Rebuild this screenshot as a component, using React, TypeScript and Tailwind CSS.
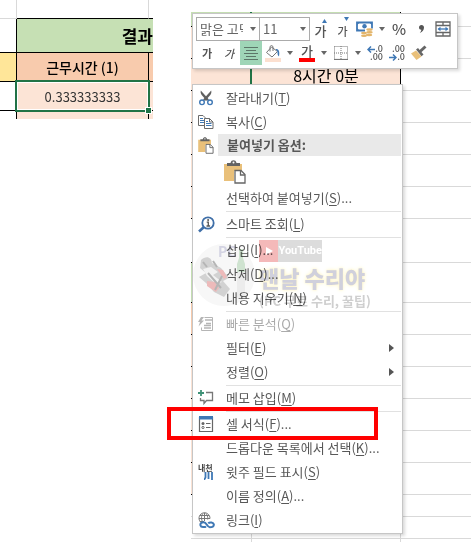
import React from 'react'

type IconProps = { className?: string }

const CutIcon = () => (
  <svg width="16" height="16" viewBox="0 0 16 16" fill="none">
    <path d="M2.800.5c-.5 2 0 3.300.9 4.500l5.200 6 2-1.500z" fill="#606060" />
    <path d="M13.200.5c.5 2 0 3.300-.9 4.500l-5.200 6-2-1.500z" fill="#606060" />
    <circle cx="4" cy="12.300" r="2.300" stroke="#3f78b5" strokeWidth="1.400" />
    <circle cx="12" cy="12.300" r="2.300" stroke="#3f78b5" strokeWidth="1.400" />
  </svg>
)

const CopyIcon = () => (
  <svg width="16" height="16" viewBox="0 0 16 16" fill="none">
    <path d="M6 11.500H.5v-10h4.500l2 2V5" stroke="#6b6b6b" />
    <path d="M2 4.500h3M2 6.500h4M2 8.500h4" stroke="#3f78b5" />
    <path d="M6.500 4.500h5L15 8v6.500H6.500z" fill="#fff" stroke="#6b6b6b" />
    <path d="M11.500 4.500V8H15" stroke="#6b6b6b" />
    <path d="M8 7.500h2M8 9.500h5.500M8 11.500h5.500" stroke="#3f78b5" />
  </svg>
)

const PasteIcon = ({ className }: IconProps) => (
  <svg className={className} viewBox="0 0 22 24" fill="none">
    <path d="M0 4h18v7H10v10H0z" fill="#e9c07a" />
    <path d="M3 6V3h3.500C7 1 8 .3 9.500.3S12 1 12.500 3H16v3z" fill="#636363" />
    <circle cx="9.500" cy="2.600" r="1" fill="#fff" />
    <path d="M11 10.500h6l4 4v8.500H11z" fill="#fff" stroke="#666" strokeWidth="1.300" />
    <path d="M16.500 10.500V15H21" stroke="#666" strokeWidth="1.300" />
  </svg>
)

const LookupIcon = () => (
  <svg width="18" height="17" viewBox="0 0 18 17" fill="none">
    <circle cx="10" cy="7" r="5.700" stroke="#3f6fa8" strokeWidth="1.800" />
    <path d="M6 11 1 15.500" stroke="#3f6fa8" strokeWidth="2.600" />
    <path d="M8.700 6.200h1.600v3.600M8.500 10h3.600" stroke="#555" strokeWidth="1.300" />
    <circle cx="10.100" cy="4" r="1" fill="#555" />
  </svg>
)

const AnalysisIcon = () => (
  <svg width="16" height="16" viewBox="0 0 16 16" fill="none" stroke="#b5b5b5">
    <path d="M6.500 1.500h8v13H3.500v-3" />
    <path d="M7 4h7M8 7.500h5M6 9.500h7M6 12h7" strokeWidth="1.500" />
    <path d="M3 1 0 6h2L.5 10.500 6 4.500H3.500L6 1z" fill="#b5b5b5" stroke="none" />
  </svg>
)

const MemoIcon = () => (
  <svg width="16" height="16" viewBox="0 0 16 16" fill="none">
    <path d="M3 0v6M0 3h6" stroke="#3f9277" strokeWidth="1.800" />
    <path d="M8 2.500h6.500v8H8.500L6 13.500v-3H2.500V8" stroke="#777" strokeWidth="1.300" />
  </svg>
)

const FormatIcon = () => (
  <svg width="16" height="16" viewBox="0 0 16 16" fill="none">
    <path d="M1.500 1.500h13v14h-13z" fill="#fff" stroke="#666" strokeWidth="1.200" />
    <path d="M1 0h14v3.500H1z" fill="#3f78b5" />
    <circle cx="5" cy="7.500" r="1.500" fill="#666" />
    <circle cx="5" cy="11.500" r="1.100" stroke="#666" />
    <path d="M8 7.500h4.500M8 11.500h4.500" stroke="#666" strokeWidth="1.200" />
  </svg>
)

const PhoneticIcon = () => (
  <span className="flex flex-col items-end">
    <span className="text-[8px] font-bold leading-[8px] text-[#444]">내천</span>
    <svg width="9" height="8" viewBox="0 0 9 8" fill="none" stroke="#3f78b5" strokeWidth="1.800">
      <path d="M1.500 0v5.500L0 8M4.500 0v7M8 0v8" />
    </svg>
  </span>
)

const LinkIcon = () => (
  <svg width="17" height="17" viewBox="0 0 17 17" fill="none">
    <g stroke="#777">
      <path d="M3 10.500A5.500 5.500 0 1 1 12 6.500M1 6.500h11M2 3.500h9M2 9.500h4" />
      <path d="M6.500 1v8M5 10.500c-2-3-2-6.500 0-9M8 1.500c1.300 1.500 2 3.500 1.700 6" />
    </g>
    <path d="M4 12.500h12" stroke="#fff" strokeWidth="5" />
    <g stroke="#3f78b5" strokeWidth="2">
      <path d="M8 14.300c-1 1.200-5 1.200-5.500-.9-.6-2.200 1.300-3.200 3.200-3.200 3 0 3.300 5 6 5 2.500 0 4.500-.8 4.100-2.900-.4-2-3.900-2.500-5.600-1.100" />
    </g>
  </svg>
)

const Caret = () => (
  <svg width="6" height="4" viewBox="0 0 6 4" fill="#666">
    <path d="M0 0h6L3 4z" />
  </svg>
)

const MoneyIcon = () => (
  <svg width="18" height="17" viewBox="0 0 18 17" fill="none">
    <path d="M1 1.500h15v8H1z" fill="#fff" stroke="#3f78b5" strokeWidth="1.800" />
    <path d="M1 1h3.500L1 4zM16 1h-3.500L16 4zM1 10V7l3 3z" fill="#3f78b5" />
    <circle cx="8.500" cy="5.300" r="2.200" fill="#3f78b5" />
    <path d="M9 7.500h8V16H5v-4h4z" fill="#fff" />
    <g fill="#e3b56b">
      <ellipse cx="13.500" cy="8.500" rx="3.200" ry="1.300" />
      <ellipse cx="13.500" cy="11.300" rx="3.200" ry="1.200" />
      <ellipse cx="13" cy="14" rx="3.200" ry="1.200" />
      <ellipse cx="8" cy="12" rx="3" ry="1.200" />
      <ellipse cx="8" cy="14.800" rx="3" ry="1.200" />
    </g>
  </svg>
)

const MergeIcon = () => (
  <svg width="16" height="16" viewBox="0 0 16 16" fill="none" stroke="#666" strokeWidth="1.300">
    <path d="M1 1h14v14H1zM1 4.500h14M1 11.500h14M8 1v3.500M8 11.500V15" />
    <path d="M3.500 8h9" stroke="#3f78b5" />
    <path d="M5.500 5.800 2.500 8l3 2.200zM10.500 5.800l3 2.200-3 2.200z" fill="#3f78b5" stroke="none" />
  </svg>
)

const AlignIcon = () => (
  <svg width="14" height="13" viewBox="0 0 14 13" stroke="#5c7568">
    <path d="M0 .5h14M2 3.500h10M0 6.500h14M2 9.500h10M0 12.500h14" />
  </svg>
)

const FillIcon = () => (
  <svg width="16" height="17" viewBox="0 0 16 17" fill="none">
    <path d="M6.500 2 1.500 7.500 7 12l5.500-5.500z" fill="#fff" stroke="#777" />
    <path d="M5 6.500V1.500Q6.500-.5 8 1.500V6" stroke="#777" />
    <path d="M10.500 4c3-.3 4.500 1.500 3.500 7.500-1.500-1-1.500-3-1.500-5z" fill="#3f78b5" />
    <path d="M0 13h16v4H0z" fill="#fce0d0" />
  </svg>
)

const BorderIcon = () => (
  <svg width="14" height="14" viewBox="0 0 14 14" fill="none" stroke="#777">
    <path d="M.5.500h13v13M.5.500v13M7 0v13M0 7h14" strokeDasharray="1 1" />
    <path d="M0 13.500h14" strokeWidth="1.200" />
  </svg>
)

const BrushIcon = () => (
  <svg width="16" height="16" viewBox="0 0 16 16" fill="none">
    <path d="M5 5.500 0 8.500 5.500 15l5-3.500z" fill="#e9c07a" />
    <path d="m5 4.500 2-1.500 5.500 6.500-2 1.700z" fill="#666" />
    <path d="M9 6.500 14.500 1.500" stroke="#666" strokeWidth="3" />
  </svg>
)

const DecimalIcon = ({ increase }: { increase?: boolean }) => (
  <span className="flex w-4 flex-col text-[9px] font-medium leading-[8px] text-[#555]">
    <span className={increase ? 'text-right' : 'flex items-center justify-end'}>
      {!increase && (
        <svg width="8" height="7" viewBox="0 0 8 7" fill="none" stroke="#3f78b5" strokeWidth="1.500">
          <path d="M8 3.500H1M4 .5l-3 3 3 3" />
        </svg>
      )}
      {increase ? '.00' : '.0'}
    </span>
    <span className={increase ? 'flex items-center justify-end' : 'text-right'}>
      {increase && (
        <svg width="8" height="7" viewBox="0 0 8 7" fill="none" stroke="#3f78b5" strokeWidth="1.500">
          <path d="M0 3.500h7M4 .5l3 3-3 3" />
        </svg>
      )}
      {increase ? '.0' : '.00'}
    </span>
  </span>
)

const SizeIcon = ({ up }: { up?: boolean }) => (
  <span className="flex items-start">
    <span className={up ? 'pt-1 text-[13px] leading-4 font-medium' : 'pt-1 text-[11px] leading-5 font-medium'}>가</span>
    <svg className="-ml-1 shrink-0" width="5" height="4" viewBox="0 0 5 4" fill="#3f78b5">
      {up ? <path d="M0 4h5L2.500 0z" /> : <path d="M0 0h5L2.500 4z" />}
    </svg>
  </span>
)

type MenuEntry = {
  label: string
  accessKey: string
  tail?: string
  icon?: React.ReactNode
  disabled?: boolean
  submenu?: boolean
}

const groups: MenuEntry[][] = [
  [{ label: '스마트 조회', accessKey: 'L', icon: <LookupIcon /> }],
  [
    { label: '삽입', accessKey: 'I', tail: '...' },
    { label: '삭제', accessKey: 'D', tail: '...' },
    { label: '내용 지우기', accessKey: 'N' },
  ],
  [
    { label: '빠른 분석', accessKey: 'Q', icon: <AnalysisIcon />, disabled: true },
    { label: '필터', accessKey: 'E', submenu: true },
    { label: '정렬', accessKey: 'O', submenu: true },
  ],
  [{ label: '메모 삽입', accessKey: 'M', icon: <MemoIcon /> }],
  [
    { label: '셀 서식', accessKey: 'F', tail: '...', icon: <FormatIcon /> },
    { label: '드롭다운 목록에서 선택', accessKey: 'K', tail: '...' },
    { label: '윗주 필드 표시', accessKey: 'S', icon: <PhoneticIcon /> },
    { label: '이름 정의', accessKey: 'A', tail: '...' },
    { label: '링크', accessKey: 'I', icon: <LinkIcon /> },
  ],
]

const MenuItem = ({ item }: { item: MenuEntry }) => (
  <button
    type="button"
    role="menuitem"
    disabled={item.disabled}
    className="flex h-6 w-full items-center text-left text-[13px] leading-6 whitespace-nowrap text-[#585858] disabled:text-[#ababab]"
  >
    <span className="flex w-[33px] shrink-0 items-center pl-[5px]">{item.icon}</span>
    <span className="flex-1">
      {item.label}(<u className="underline-offset-2">{item.accessKey}</u>){item.tail}
    </span>
    {item.submenu && (
      <svg className="mr-2" width="5" height="8" viewBox="0 0 5 8" fill="#555">
        <path d="M0 0v8l5-4z" />
      </svg>
    )}
  </button>
)

const ContextMenu = () => (
  <div role="menu" className="w-[211px] border border-[#c6c6c6] bg-white py-px shadow-[2px_2px_3px_rgba(0,0,0,0.15)]">
    <MenuItem item={{ label: '잘라내기', accessKey: 'T', icon: <CutIcon /> }} />
    <MenuItem item={{ label: '복사', accessKey: 'C', icon: <CopyIcon /> }} />
    <div className="flex h-6 items-start">
      <span className="flex w-[25px] shrink-0 pt-[3px] pl-[5px]">
        <PasteIcon className="h-[17px] w-4" />
      </span>
      <span className="mr-px h-[22px] flex-1 bg-[#e9e9e9] pl-[9px] text-[13px] leading-[22px] font-bold text-[#585858]">
        붙여넣기 옵션:
      </span>
    </div>
    <button type="button" role="menuitem" aria-label="붙여넣기" className="flex h-7 w-full items-center pl-[31px]">
      <PasteIcon className="h-6 w-[22px]" />
    </button>
    <MenuItem item={{ label: '선택하여 붙여넣기', accessKey: 'S', tail: '...' }} />
    {groups.map((group) => (
      <React.Fragment key={group[0].label}>
        <div role="separator" className="mr-px ml-[33px] h-[2px] border-b border-[#e1e1e1]" />
        {group.map((item) => (
          <MenuItem key={item.label} item={item} />
        ))}
      </React.Fragment>
    ))}
  </div>
)

const ToolButton = ({ label, active, children }: { label: string; active?: boolean; children: React.ReactNode }) => (
  <button
    type="button"
    aria-label={label}
    className={
      active
        ? 'flex h-6 w-[22px] items-center justify-center bg-[#9fd5b7]'
        : 'flex h-6 w-[22px] items-center justify-center'
    }
  >
    {children}
  </button>
)

const DropButton = ({ label }: { label: string }) => (
  <button type="button" aria-label={label} className="flex h-6 w-3 items-center justify-center">
    <Caret />
  </button>
)

const MiniToolbar = () => (
  <div className="w-[266px] border border-[#c6c6c6] bg-white p-[3px] text-[#555] shadow-[2px_2px_3px_rgba(0,0,0,0.15)]">
    <div className="flex">
      <label className="relative flex items-center">
        <select
          aria-label="글꼴"
          className="h-6 w-16 appearance-none border border-[#ababab] bg-white pr-4 pl-[3px] text-[13px] leading-5 text-[#666]"
        >
          <option>맑은 고딕</option>
        </select>
        <span className="pointer-events-none absolute right-1">
          <Caret />
        </span>
      </label>
      <label className="relative flex items-center">
        <select
          aria-label="글꼴 크기"
          className="h-6 w-[50px] appearance-none border border-l-0 border-[#ababab] bg-white pr-4 pl-[3px] text-[13px] leading-5 text-[#666]"
        >
          <option>11</option>
        </select>
        <span className="pointer-events-none absolute right-1">
          <Caret />
        </span>
      </label>
      <ToolButton label="글꼴 크기 크게">
        <SizeIcon up />
      </ToolButton>
      <ToolButton label="글꼴 크기 작게">
        <SizeIcon />
      </ToolButton>
      <ToolButton label="회계 표시 형식">
        <MoneyIcon />
      </ToolButton>
      <DropButton label="통화 선택" />
      <ToolButton label="백분율">
        <span className="text-[15px] leading-6 font-medium">%</span>
      </ToolButton>
      <ToolButton label="쉼표 스타일">
        <svg width="5" height="8" viewBox="0 0 5 8" fill="#555">
          <path d="M2.500 0C4 0 5 1 5 2.600 5 5 3.500 7.200.8 8c1-1.300 1.500-2.300 1.500-3.200C1 4.800 0 3.800 0 2.500S1 0 2.500 0z" />
        </svg>
      </ToolButton>
      <ToolButton label="병합하고 가운데 맞춤">
        <MergeIcon />
      </ToolButton>
    </div>
    <div className="flex">
      <ToolButton label="굵게">
        <span className="text-[11px] leading-6 font-bold">가</span>
      </ToolButton>
      <ToolButton label="기울임꼴">
        <span className="text-[11px] leading-6 font-medium italic">가</span>
      </ToolButton>
      <ToolButton label="가운데 맞춤" active>
        <AlignIcon />
      </ToolButton>
      <ToolButton label="채우기 색">
        <FillIcon />
      </ToolButton>
      <DropButton label="채우기 색 선택" />
      <ToolButton label="글꼴 색">
        <span className="flex w-4 flex-col items-center border-b-4 border-[#f00] text-[13px] leading-[14px] font-medium">
          가
        </span>
      </ToolButton>
      <DropButton label="글꼴 색 선택" />
      <ToolButton label="테두리">
        <BorderIcon />
      </ToolButton>
      <DropButton label="테두리 선택" />
      <ToolButton label="자릿수 늘림">
        <DecimalIcon />
      </ToolButton>
      <ToolButton label="자릿수 줄임">
        <DecimalIcon increase />
      </ToolButton>
      <ToolButton label="서식 복사">
        <BrushIcon />
      </ToolButton>
    </div>
  </div>
)

const Watermark = () => (
  <div className="pointer-events-none absolute top-[236px] left-0.5 flex items-start gap-1 mix-blend-multiply">
    <svg width="62" height="76" viewBox="0 0 62 76" fill="none">
      <circle cx="31" cy="39" r="31" fill="#f7f7f7" />
      <path d="M8 24c5-5 11-3 11 3l9 5 8 10-6 3 7 8-6 8-10-5-8-9-7-6 7-4-6-5z" fill="#d2d2d2" />
      <path d="m10 33 8-2 7 5-5 3 9 7-6 2-9-8z" fill="#f2f2f2" />
      <path d="m14 45 8 1 4 6-3 4-9-6zM24 33l6 1 4 7-3 2z" fill="#edbaba" />
      <path d="M20 25l4 6M15 37l13 15M29 40l-7 14M10 26l4 5" stroke="#b5b5b5" strokeWidth="2" />
      <path d="M46 13h4v9l2 6v10h-8V28l2-6z" fill="#cfe3d0" />
      <path d="M44 36h8v26h-8z" fill="#ececec" />
      <text x="25" y="21" fontSize="14" fontWeight="700" fill="#d3d3e2">
        PC
      </text>
    </svg>
    <div className="flex flex-col pt-1 whitespace-nowrap text-[#cfcfcf]">
      <div className="flex h-[22px] w-[63px] items-center bg-[#dcdcdc]">
        <span className="flex h-full w-5 items-center justify-center bg-[#f4b9b9]">
          <svg width="8" height="8" viewBox="0 0 8 8" fill="#fff">
            <path d="M1 0v8l7-4z" />
          </svg>
        </span>
        <span className="flex-1 text-center font-['Roboto',sans-serif] text-[11px] leading-5 font-bold text-white">
          YouTube
        </span>
      </div>
      <span className="text-[22px] leading-[31px] font-black text-[#d0d0dc] [text-shadow:0_0_4px_#fff6c8,0_0_2px_#fff6c8]">
        맨날 수리야
      </span>
      <span className="text-[13px] leading-4 font-bold">(PC 무료 수리, 꿀팁)</span>
    </div>
  </div>
)

// rows of the sheet behind the menu
const sheetRows = [
  { height: 'h-[15px]', fill: 'bg-[#c6e0b4]' },
  { height: 'h-8', fill: 'bg-[#fce4d6]' },
  { height: 'h-8', fill: 'bg-[#fce4d6]', value: '8시간 0분' },
  { height: 'h-8', fill: 'bg-[#fce4d6]' },
  { height: 'h-8', fill: 'bg-[#fce4d6]' },
  { height: 'h-8', fill: 'bg-[#fce4d6]' },
  { height: 'h-8', fill: 'bg-[#fce4d6]' },
  { height: 'h-[44px]', fill: 'bg-white' },
  { height: 'h-10', fill: 'bg-[#c6e0b4]' },
  { height: 'h-8', fill: 'bg-[#f8cbad]' },
  { height: 'h-8', fill: 'bg-[#fce4d6]' },
  { height: 'h-8', fill: 'bg-[#fce4d6]' },
  { height: 'h-8', fill: 'bg-[#fce4d6]' },
  { height: 'h-8', fill: 'bg-[#fce4d6]' },
  { height: 'h-8', fill: 'bg-[#fce4d6]' },
  { height: 'h-[22px]', plain: true },
  { height: 'h-[22px]', plain: true },
  { height: 'h-[3px]', plain: true, last: true },
]

const BackSheet = () => (
  <table className="w-full table-fixed border-separate border-spacing-0">
    <colgroup>
      <col className="w-[61px]" />
      <col className="w-[149px]" />
      <col />
    </colgroup>
    <tbody>
      {sheetRows.map((row, i) => {
        const cell = row.plain
          ? `border-r border-[#d9d9d9] p-0 ${row.last ? '' : 'border-b'}`
          : `border-b border-b-black p-0 ${row.fill}`
        return (
          <tr key={i} className={row.height}>
            <td className={row.plain ? cell : `${cell} border-r-2 border-r-[#217346]`} />
            <td
              className={
                row.plain
                  ? cell
                  : `${cell} border-r border-r-black text-center text-base leading-none text-black`
              }
            >
              {row.value}
            </td>
            <td className={row.last ? 'p-0' : 'border-b border-[#d9d9d9] p-0'} />
          </tr>
        )
      })}
    </tbody>
  </table>
)

const ResultSheet = () => (
  <table className="w-[153px] table-fixed border-separate border-spacing-0 text-black">
    <colgroup>
      <col className="w-[17px]" />
      <col className="w-[132px]" />
      <col className="w-1" />
    </colgroup>
    <tbody>
      <tr className="h-[19px]">
        <td className="border-r border-b border-[#d9d9d9] p-0" />
        <td className="border-r border-b border-r-[#d9d9d9] border-b-black p-0" />
        <td className="border-b border-black p-0" />
      </tr>
      <tr className="h-[34px]">
        <td className="border-r border-b border-black p-0" />
        <th
          colSpan={2}
          className="overflow-hidden border-b border-black bg-[#c6e0b4] p-0 text-right text-[17px] leading-none font-bold"
        >
          결과
        </th>
      </tr>
      <tr className="h-[29px]">
        <td className="border-r border-b border-black bg-[#ffe699] p-0" />
        <th className="border-r border-b border-black bg-[#f8cbad] p-0 text-sm leading-none font-medium">
          근무시간 (1)
        </th>
        <td className="border-b border-black bg-[#f8cbad] p-0" />
      </tr>
      <tr className="h-[29px]">
        <td className="border-r border-b border-black p-0" />
        <td className="relative border-r border-b border-black bg-[#fce4d6] p-0 text-center text-[13px] leading-none text-[#333]">
          0.333333333
          <span className="absolute -inset-x-[2px] -inset-y-[2px] border-2 border-[#217346] shadow-[inset_0_0_0_1px_#fff]" />
          <span className="absolute -right-[3px] -bottom-[3px] size-[5px] bg-[#217346] outline outline-white" />
        </td>
        <td className="border-b border-black bg-[#fce4d6] p-0" />
      </tr>
      <tr className="h-2">
        <td className="border-r border-black p-0" />
        <td className="border-r border-black bg-[#fce4d6] p-0" />
        <td className="bg-[#fce4d6] p-0" />
      </tr>
    </tbody>
  </table>
)

const App = () => {
  return (
    <main className="flex items-start gap-[38px] overflow-hidden bg-white font-['Noto_Sans_CJK_KR',sans-serif]">
      <ResultSheet />
      <section className="relative flex-1 pt-3">
        <BackSheet />
        <div className="absolute top-[13px] left-px flex flex-col gap-[15px]">
          <MiniToolbar />
          <ContextMenu />
        </div>
        <Watermark />
        {/* highlight around the cell format entry */}
        <div className="pointer-events-none absolute top-[407px] -left-6 h-[33px] w-[211px] border-4 border-[#f00]" />
      </section>
    </main>
  )
}

export default App
